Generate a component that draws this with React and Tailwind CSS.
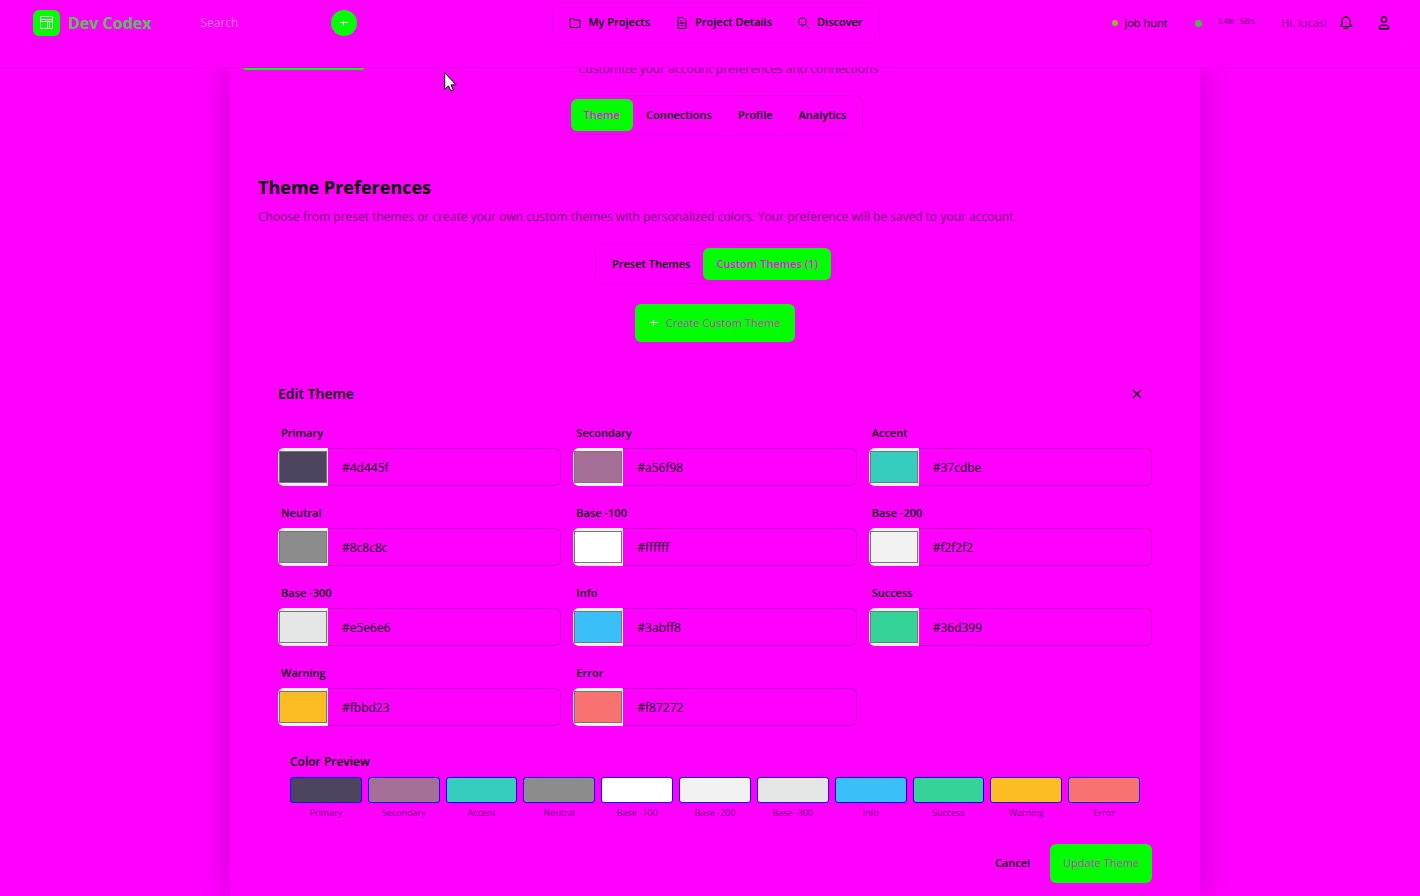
import React from "react";

const colors = [
  ["Primary", "#4d445f"],
  ["Secondary", "#a56f98"],
  ["Accent", "#37cdbe"],
  ["Neutral", "#8c8c8c"],
  ["Base -100", "#ffffff"],
  ["Base -200", "#f2f2f2"],
  ["Base -300", "#e5e6e6"],
  ["Info", "#3abff8"],
  ["Success", "#36d399"],
  ["Warning", "#fbbd23"],
  ["Error", "#f87272"],
];

function Icon({ children, className }) {
  return (
    <svg viewBox="0 0 24 24" fill="none" stroke="currentColor" strokeWidth="2" strokeLinecap="round" strokeLinejoin="round" className={className} aria-hidden="true">
      {children}
    </svg>
  );
}

function Header() {
  return (
    <header className="sticky top-0 z-10 flex h-[68px] items-start border-b border-[#eb00eb] bg-[#ff00ff]">
      <div className="flex flex-1 pl-5">
        <div className="flex h-[43px] w-[350px] items-center rounded-xl border-b border-[#f500f5] pt-[3px] pr-[13px] pl-[13px]">
          <span className="flex h-[26px] w-[27px] items-center justify-center rounded-md bg-[#00ff00]">
            <svg viewBox="0 0 13 13" className="size-[13px]" fill="none" stroke="#f5c4f5" aria-hidden="true">
              <path d="M.5 .5h12v12H.5zM.5 3.5h12M.5 5.5h12M7.5 5.5v7M9.5 5.5v7" />
            </svg>
          </span>
          <span className="ml-2 text-base font-bold text-[#55c455]">Dev Codex</span>
          <input aria-label="Search" placeholder="Search" className="ml-[45px] w-24 min-w-0 flex-1 bg-transparent px-1 text-xs outline-none placeholder:text-[#dd77dd]" />
          <button aria-label="Add" className="flex size-[26px] items-center justify-center rounded-full bg-[#00ff00] text-[#ffe0ff]">
            <svg viewBox="0 0 8 8" className="size-2" stroke="currentColor" aria-hidden="true"><path d="M3.5 1v6M0 3.5h8" /></svg>
          </button>
        </div>
      </div>
      <nav className="mt-[2px] flex h-[41px] items-center gap-[26px] rounded-lg border border-[#e600e6] px-4 text-[11px] font-semibold">
        <a href="#projects" className="flex items-center gap-[7px]">
          <Icon className="size-3"><path d="M2 19V5q0-2 2-2h4l3 3h9q2 0 2 2v11q0 2-2 2H4q-2 0-2-2z" /></Icon>My Projects
        </a>
        <a href="#details" className="flex items-center gap-[7px]">
          <Icon className="size-3"><path d="M5 1h9l6 6v14q0 2-2 2H6q-2 0-2-2V2M8 12h8M8 17h8M9 7h2" /></Icon>Project Details
        </a>
        <a href="#discover" className="flex items-center gap-[7px]">
          <Icon className="size-3"><circle cx="9" cy="9" r="7.5" /><path d="m15 15 8 8" /></Icon>Discover
        </a>
      </nav>
      <div className="flex flex-1 justify-end pr-2">
        <div className="flex h-[43px] items-center rounded-xl border-b border-[#f500f5] pt-1 pr-[21px] pl-4 text-[11px]">
          <span className="size-[6px] rounded-full bg-[#85bd22]" />
          <span className="ml-[6px]">job hunt</span>
          <span className="ml-[27px] size-[7px] rounded-full bg-[#4cb54c]" />
          <span className="ml-4 font-['Liberation_Mono',monospace] text-[9px] text-[#730073]">14m 58s</span>
          <span className="ml-[26px] text-[#800080]">Hi, lucas!</span>
          <button aria-label="Notifications" className="ml-3"><Icon className="size-[14px]"><path d="M2 18h20l-3-4V9a7 7 0 0 0-14 0v5zM9 21h6M12 1v1" /></Icon></button>
          <button aria-label="Account" className="ml-6"><Icon className="size-[14px]"><circle cx="12" cy="6" r="4.5" /><path d="M4 22v-3l3-3h10l3 3v3z" /></Icon></button>
        </div>
      </div>
    </header>
  );
}

export default function App() {
  return (
    <div className="flex min-h-screen flex-col bg-[#ff00ff] font-['Open_Sans','Noto_Sans',sans-serif] text-black">
      <Header />
      <div className="relative flex flex-1 justify-center overflow-hidden pl-[10px]">
        <main className="w-full max-w-[970px] bg-[#ff00ff] px-3 pb-3 shadow-[0_0_32px_rgba(0,0,0,0.22)]">
          <div className="-mt-[28px] flex h-[30px]">
            <button aria-label="Back" className="h-[30px] w-[123px] rounded-sm bg-[#00ff00]" />
          </div>
          <p className="-mt-[11px] pl-[26px] text-center text-xs leading-5 text-[#700070]">Customize your account preferences and connections</p>
          <div className="mt-4 flex justify-center">
            <div className="flex h-10 items-center rounded-lg border border-[#e600e6] px-[3px] text-[11px] font-semibold">
              <button className="h-8 rounded-md bg-[#00ff00] px-[13px] text-[#ff00ff]">Theme</button>
              <button className="h-8 px-[13px]">Connections</button>
              <button className="h-8 px-[13px]">Profile</button>
              <button className="h-8 px-[13px]">Analytics</button>
            </div>
          </div>
          <section className="px-4 pt-10">
            <h2 className="text-lg leading-6 font-bold">Theme Preferences</h2>
            <p className="mt-2 text-xs leading-5 text-[#700070]">Choose from preset themes or create your own custom themes with personalized colors. Your preference will be saved to your account.</p>
            <div className="mt-[17px] flex justify-center">
              <div className="flex h-10 items-center rounded-lg border border-[#e600e6] px-[3px] text-[11px] font-semibold">
                <button className="h-8 px-[13px]">Preset Themes</button>
                <button className="h-8 rounded-md bg-[#00ff00] px-[13px] text-[#ff00ff]">Custom Themes (1)</button>
              </div>
            </div>
            <div className="mt-5 flex justify-center">
              <button className="flex h-[38px] items-center gap-2 rounded-md bg-[#00ff00] px-[15px] text-[11px] text-[#d030d0]">
                <svg viewBox="0 0 8 8" className="size-2 text-white" stroke="currentColor" aria-hidden="true"><path d="M3.5 1v6M0 3.5h8" /></svg>
                Create Custom Theme
              </button>
            </div>
          </section>
          <form className="px-9 pt-10" onSubmit={(e) => e.preventDefault()}>
            <div className="flex h-6 items-center justify-between pr-[10px]">
              <h3 className="text-sm font-semibold">Edit Theme</h3>
              <button type="button" aria-label="Close"><svg viewBox="0 0 10 10" className="size-[10px]" stroke="currentColor" aria-hidden="true"><path strokeWidth="1.2" d="m1 1 8 8M9 1 1 9" /></svg></button>
            </div>
            <div className="mt-[18px] grid grid-cols-3 gap-x-3 gap-y-4">
              {colors.map(([name, value]) => (
                <div key={name} className="h-16">
                  <label htmlFor={name} className="block h-6 px-[3px] text-[11px] leading-[18px] font-semibold">{name}</label>
                  <div className="flex h-[38px]">
                    <input type="color" aria-label={name + " color"} defaultValue={value} className="h-full w-[50px] rounded-l-md bg-[#f0f0f0] px-px py-[3px] [&::-webkit-color-swatch]:rounded-none [&::-webkit-color-swatch]:border [&::-webkit-color-swatch]:border-[#767676] [&::-webkit-color-swatch-wrapper]:p-0" />
                    <input id={name} defaultValue={value} className="h-full min-w-0 flex-1 rounded-r-md border border-l-0 border-[#cc00cc] px-[14px] text-xs outline-none" />
                  </div>
                </div>
              ))}
            </div>
            <div className="px-3 pt-6">
              <h4 className="text-xs leading-5 font-semibold">Color Preview</h4>
              <div className="mt-[5px] grid grid-cols-11 gap-[6px]">
                {colors.map(([name, value]) => (
                  <div key={name} className="text-center">
                    <div className="h-[26px] rounded-[3px] border border-[#0000ff]" style={{ backgroundColor: value }} />
                    <div className="mt-[3px] text-[9px] leading-[14px] text-[#700070]">{name}</div>
                  </div>
                ))}
              </div>
            </div>
            <div className="mt-6 flex justify-end gap-2 text-[11px]">
              <button type="button" className="h-[39px] px-3 font-semibold">Cancel</button>
              <button className="h-[39px] rounded-md bg-[#00ff00] px-[13px] text-[#d030d0]">Update Theme</button>
            </div>
          </form>
        </main>
      </div>
      <svg viewBox="0 0 13 20" className="pointer-events-none absolute top-[72px] left-[444px] z-20 h-5 w-[13px]" aria-hidden="true">
        <path d="M.7 .7v16.6l3.8-3.4 2.4 5.2 2.5-1-2.4-5.2h5.1z" fill="white" stroke="black" />
      </svg>
    </div>
  );
}
